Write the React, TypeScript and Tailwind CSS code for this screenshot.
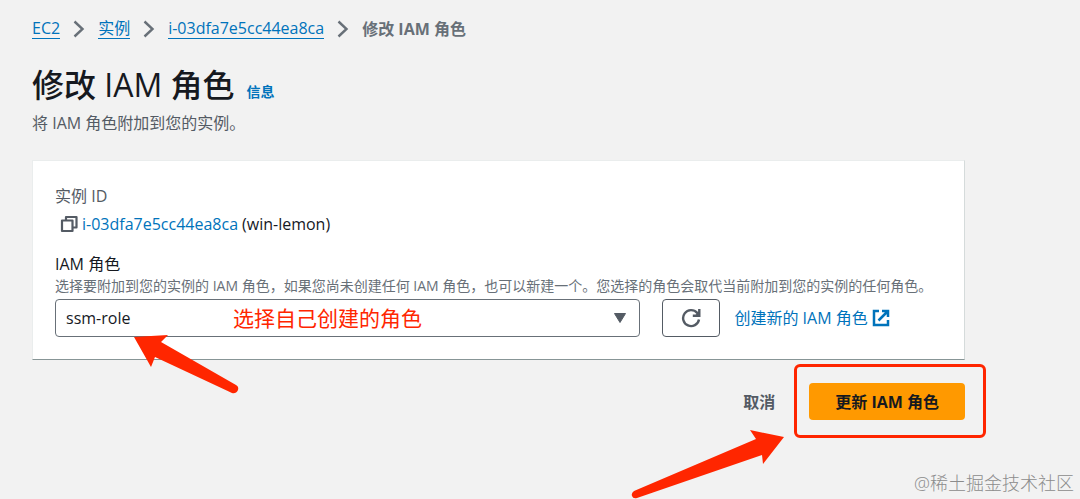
import React from 'react';

interface IconProps {
  className?: string;
}

const ChevronIcon: React.FC<IconProps> = ({ className }) => (
  <svg viewBox="0 0 12 18" className={className} fill="none" stroke="#687078" strokeWidth="2.4" aria-hidden="true">
    <path d="M1.5 1.5 9.5 9l-8 7.5" />
  </svg>
);

const CopyIcon: React.FC<IconProps> = ({ className }) => (
  <svg viewBox="0 0 18 18" className={className} fill="none" stroke="#545b64" strokeWidth="2.2" strokeLinejoin="round" aria-hidden="true">
    <path d="M2 5.5h10.5V16H2z" />
    <path d="M6 5V2h10.500v10.500h-4" />
  </svg>
);

const RefreshIcon: React.FC<IconProps> = ({ className }) => (
  <svg viewBox="0 0 20 20" className={className} fill="none" stroke="#545b64" strokeWidth="2.4" aria-hidden="true">
    <path d="M18 11.5a8 8 0 1 1-1.8-6.600L18 7" />
    <path d="M18.300 1v6.700h-6.500" />
    <path d="M18.300 3v4.700h-4.500z" fill="#545b64" stroke="none" />
  </svg>
);

const ExternalIcon: React.FC<IconProps> = ({ className }) => (
  <svg viewBox="0 0 18 18" className={className} fill="none" stroke="#0073bb" strokeWidth="2.5" aria-hidden="true">
    <path d="M7 2H2v14h14v-5" />
    <path d="M10 2h6v6M16 2 6.5 11.5" />
  </svg>
);

const crumbs = ['EC2', '实例', 'i-03dfa7e5cc44ea8ca'];

const Breadcrumbs: React.FC = () => (
  <nav aria-label="导航" className="flex flex-wrap items-center">
    {crumbs.map((item) => (
      <React.Fragment key={item}>
        <a href="#" className="border-b border-[#0073bb] leading-5 text-[#0073bb]">
          {item}
        </a>
        <ChevronIcon className="mx-[13px] h-[18px] w-3" />
      </React.Fragment>
    ))}
    <span className="font-bold leading-5 text-[#687078]">修改 IAM 角色</span>
  </nav>
);

const RoleSelect: React.FC = () => (
  <div className="relative w-[66%]">
    <select
      id="iam-role"
      defaultValue="ssm-role"
      className="block h-[38px] w-full appearance-none rounded-sm border border-[#687078] bg-white px-[10px] text-[#16191f]"
    >
      <option value="ssm-role">ssm-role</option>
    </select>
    <svg viewBox="0 0 12 10" className="pointer-events-none absolute top-[14px] right-[14px] h-[10px] w-3" aria-hidden="true">
      <path d="M.5.5h11L6 9.500z" fill="#545b64" stroke="#545b64" strokeLinejoin="round" />
    </svg>

    {/* 红色批注 */}
    <span className="pointer-events-none absolute top-1 left-[178px] text-[21px] leading-[30px] whitespace-nowrap text-[#ff2600]">
      选择自己创建的角色
    </span>
    <svg viewBox="0 0 106 60" className="pointer-events-none absolute top-[35px] left-[78px] h-[60px] w-[106px]" aria-hidden="true">
      <path d="M1 3 35 1l-7 7 75 43q3 1.500 2 5-2 4-6 3L22 23l-4 10z" fill="#ff2600" />
    </svg>
  </div>
);

export default function App() {
  return (
    <main className="relative min-h-screen overflow-hidden bg-[#f2f2f2] pt-[18px] pr-[115px] pl-8 font-['Open_Sans','Noto_Sans_CJK_SC',sans-serif] text-base text-[#16191f]">
      <Breadcrumbs />

      <header className="mt-6">
        <div className="flex items-baseline gap-3">
          <h1 className="text-[32px] leading-[44px] font-medium">修改 IAM 角色</h1>
          <a href="#" className="text-sm font-bold text-[#0073bb]">
            信息
          </a>
        </div>
        <p className="mt-1 leading-6 text-[#545b64]">将 IAM 角色附加到您的实例。</p>
      </header>

      <section className="mt-[25px] border border-t-[#eaeded] border-r-[#d5dbdb] border-b-[#879596] border-l-[#eaeded] bg-white px-[22px] pt-[23px] pb-[22px]">
        <div className="leading-6 text-[#545b64]">实例 ID</div>
        <div className="mt-1 flex items-center leading-6">
          <button type="button" aria-label="复制" className="mr-1 ml-[5px]">
            <CopyIcon className="h-[18px] w-[18px]" />
          </button>
          <a href="#" className="mr-1 text-[#0073bb]">
            i-03dfa7e5cc44ea8ca
          </a>
          <span>(win-lemon)</span>
        </div>

        <label htmlFor="iam-role" className="mt-4 block leading-6">
          IAM 角色
        </label>
        <p className="text-sm leading-5 whitespace-nowrap text-[#687078]">
          选择要附加到您的实例的 IAM 角色，如果您尚未创建任何 IAM 角色，也可以新建一个。您选择的角色会取代当前附加到您的实例的任何角色。
        </p>
        <div className="mt-[3px] flex items-center">
          <RoleSelect />
          <button
            type="button"
            aria-label="刷新"
            className="ml-[22px] flex h-[38px] w-[58px] items-center justify-center rounded-sm border border-[#545b64] bg-white"
          >
            <RefreshIcon className="h-5 w-5" />
          </button>
          <a href="#" className="ml-[14px] flex items-center gap-1 whitespace-nowrap text-[#0073bb]">
            创建新的 IAM 角色
            <ExternalIcon className="h-[18px] w-[18px]" />
          </a>
        </div>
      </section>

      <div className="mt-[23px] flex items-center justify-end gap-[34px]">
        <button type="button" className="font-bold text-[#545b64]">
          取消
        </button>
        <div className="relative">
          <button type="button" className="block h-[37px] rounded-sm bg-[#ff9900] px-[26px] font-bold">
            更新 IAM 角色
          </button>
          <div className="pointer-events-none absolute -top-[19px] -right-[21px] -bottom-[18px] -left-[15px] rounded-md border-[3px] border-[#ff2600]" />
          <svg viewBox="0 0 154 70" className="pointer-events-none absolute top-[46px] right-full mr-6 h-[70px] w-[154px]" aria-hidden="true">
            <path d="M153 8 119 1l6 9L3 62q-3 2-2 5 1 3 5 2l125-43 1 9z" fill="#ff2600" />
          </svg>
        </div>
      </div>

      <div className="pointer-events-none absolute right-[6px] bottom-1 text-lg leading-6 font-light text-[#8c8c8c]">
        @稀土掘金技术社区
      </div>
    </main>
  );
}
